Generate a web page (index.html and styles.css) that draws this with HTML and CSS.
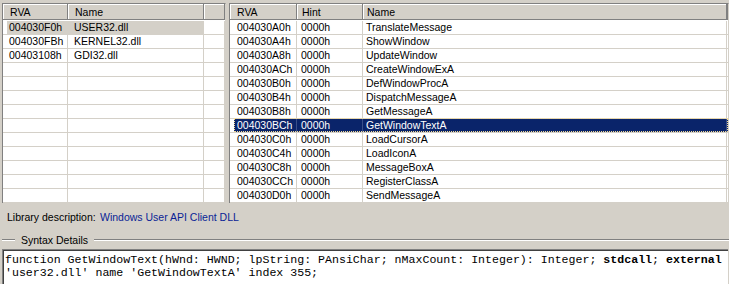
FILE: index.html
```html
<html>
	<head>
		<title>Imports</title>
		<link rel="stylesheet" href="styles.css">
	</head>
	<body>
		<div class="panes">
			<div class="list libs">
				<div class="hdr">
					<div class="hc c-rva">RVA</div>
					<div class="hc c-lname">Name</div>
					<div class="hc c-lfill"></div>
				</div>
				<div class="rows">
					<div class="row sel-grey"><div class="cell c-rva">004030F0h</div><div class="cell c-lname">USER32.dll</div><div class="cell c-lfill"></div></div>
					<div class="row"><div class="cell c-rva">004030FBh</div><div class="cell c-lname">KERNEL32.dll</div><div class="cell c-lfill"></div></div>
					<div class="row"><div class="cell c-rva">00403108h</div><div class="cell c-lname">GDI32.dll</div><div class="cell c-lfill"></div></div>
					<div class="row"><div class="cell c-rva"></div><div class="cell c-lname"></div><div class="cell c-lfill"></div></div>
					<div class="row"><div class="cell c-rva"></div><div class="cell c-lname"></div><div class="cell c-lfill"></div></div>
					<div class="row"><div class="cell c-rva"></div><div class="cell c-lname"></div><div class="cell c-lfill"></div></div>
					<div class="row"><div class="cell c-rva"></div><div class="cell c-lname"></div><div class="cell c-lfill"></div></div>
					<div class="row"><div class="cell c-rva"></div><div class="cell c-lname"></div><div class="cell c-lfill"></div></div>
					<div class="row"><div class="cell c-rva"></div><div class="cell c-lname"></div><div class="cell c-lfill"></div></div>
					<div class="row"><div class="cell c-rva"></div><div class="cell c-lname"></div><div class="cell c-lfill"></div></div>
					<div class="row"><div class="cell c-rva"></div><div class="cell c-lname"></div><div class="cell c-lfill"></div></div>
					<div class="row"><div class="cell c-rva"></div><div class="cell c-lname"></div><div class="cell c-lfill"></div></div>
					<div class="row"><div class="cell c-rva"></div><div class="cell c-lname"></div><div class="cell c-lfill"></div></div>
				</div>
			</div>
			<div class="list funcs">
				<div class="hdr">
					<div class="hc c-rva">RVA</div>
					<div class="hc c-hint">Hint</div>
					<div class="hc c-name">Name</div>
					<div class="hc c-fill"></div>
				</div>
				<div class="rows">
					<div class="row"><div class="cell c-rva">004030A0h</div><div class="cell c-hint">0000h</div><div class="cell c-name">TranslateMessage</div><div class="cell c-fill"></div></div>
					<div class="row"><div class="cell c-rva">004030A4h</div><div class="cell c-hint">0000h</div><div class="cell c-name">ShowWindow</div><div class="cell c-fill"></div></div>
					<div class="row"><div class="cell c-rva">004030A8h</div><div class="cell c-hint">0000h</div><div class="cell c-name">UpdateWindow</div><div class="cell c-fill"></div></div>
					<div class="row"><div class="cell c-rva">004030ACh</div><div class="cell c-hint">0000h</div><div class="cell c-name">CreateWindowExA</div><div class="cell c-fill"></div></div>
					<div class="row"><div class="cell c-rva">004030B0h</div><div class="cell c-hint">0000h</div><div class="cell c-name">DefWindowProcA</div><div class="cell c-fill"></div></div>
					<div class="row"><div class="cell c-rva">004030B4h</div><div class="cell c-hint">0000h</div><div class="cell c-name">DispatchMessageA</div><div class="cell c-fill"></div></div>
					<div class="row"><div class="cell c-rva">004030B8h</div><div class="cell c-hint">0000h</div><div class="cell c-name">GetMessageA</div><div class="cell c-fill"></div></div>
					<div class="row sel-navy"><div class="cell c-rva">004030BCh</div><div class="cell c-hint">0000h</div><div class="cell c-name">GetWindowTextA</div><div class="cell c-fill"></div></div>
					<div class="row"><div class="cell c-rva">004030C0h</div><div class="cell c-hint">0000h</div><div class="cell c-name">LoadCursorA</div><div class="cell c-fill"></div></div>
					<div class="row"><div class="cell c-rva">004030C4h</div><div class="cell c-hint">0000h</div><div class="cell c-name">LoadIconA</div><div class="cell c-fill"></div></div>
					<div class="row"><div class="cell c-rva">004030C8h</div><div class="cell c-hint">0000h</div><div class="cell c-name">MessageBoxA</div><div class="cell c-fill"></div></div>
					<div class="row"><div class="cell c-rva">004030CCh</div><div class="cell c-hint">0000h</div><div class="cell c-name">RegisterClassA</div><div class="cell c-fill"></div></div>
					<div class="row"><div class="cell c-rva">004030D0h</div><div class="cell c-hint">0000h</div><div class="cell c-name">SendMessageA</div><div class="cell c-fill"></div></div>
				</div>
			</div>
		</div>

		<div class="libdesc">
			<span class="lbl">Library description:</span>
			<span class="val">Windows User API Client DLL</span>
		</div>

		<div class="group">
			<div class="group-title">
				<span class="edge-l"></span>
				<span class="legend">Syntax Details</span>
				<span class="edge-r"></span>
			</div>
			<div class="code">function GetWindowText(hWnd: HWND; lpString: PAnsiChar; nMaxCount: Integer): Integer; <b>stdcall</b>; <b>external</b>
'user32.dll' name 'GetWindowTextA' index 355;</div>
		</div>
	</body>
</html>
```

FILE: styles.css
```css
body {
	margin: 0;
	padding: 3px 0 0 2px;
	width: 729px;
	height: 284px;
	box-sizing: border-box;
	overflow: hidden;
	background: #d4d0c8;
	color: #000000;
	font-family: "Liberation Sans", Arial, sans-serif;
	font-size: 10.5px;
}

/* the two list views */
.panes {
	display: flex;
	gap: 3px;
	height: 200px;
}

.list {
	background: #ffffff;
	border-left: 1px solid #808080;
	border-top: 1px solid #808080;
	border-right: 1px solid #d4d0c8;
	overflow: hidden;
}

.libs { width: 224px; box-sizing: border-box; }
.funcs { width: 500px; box-sizing: border-box; }

.hdr {
	display: flex;
	height: 16px;
	background: #d4d0c8;
}

.hc {
	box-sizing: border-box;
	height: 16px;
	line-height: 16px;
	white-space: nowrap;
	box-shadow: inset -1px -1px 0 #808080, inset 1px 1px 0 #ffffff;
}

.rows {
	padding-top: 1px;
}

.row {
	display: flex;
	height: 14px;
	box-sizing: border-box;
	border-bottom: 1px solid #d4d0c8;
}

.cell {
	box-sizing: border-box;
	height: 13px;
	line-height: 13px;
	white-space: nowrap;
	overflow: hidden;
	border-right: 1px solid #d4d0c8;
}

/* column widths */
.c-rva { width: 65px; padding-left: 6px; }
.c-lname { width: 136px; padding-left: 6px; }
.c-lfill { width: 21px; background: #ffffff; }
.funcs .c-rva { width: 67px; padding-left: 7px; }
.c-hint { width: 66px; padding-left: 4px; }
.c-name { width: 364px; padding-left: 3px; }
.c-fill { width: 1px; border-right: none; }

.hc.c-rva { padding-left: 7px; }
.hc.c-lname { padding-left: 7px; }
.hc.c-hint { padding-left: 5px; }
.hc.c-name { padding-left: 4px; }
.hc.c-lfill { background: #d4d0c8; }

/* selections */
.sel-grey {
	background: linear-gradient(90deg, #ffffff 4px, #d4d0c8 4px);
}

.sel-navy {
	position: relative;
	color: #ffffff;
	background: linear-gradient(90deg, #ffffff 4px, #0a246a 4px);
}

.sel-navy .cell { border-right-color: #3a4f8a; }

.sel-navy::after {
	content: "";
	position: absolute;
	left: 4px;
	right: 0;
	top: -1px;
	bottom: 0;
	border: 1px dotted #f5db95;
}

/* library description */
.libdesc {
	height: 28px;
	line-height: 28px;
	padding-left: 5px;
	display: flex;
}

.lbl { width: 93px; }
.val { color: #0a1f96; }

/* syntax group */
.group-title {
	display: flex;
	align-items: center;
	height: 18px;
}

.edge-l, .edge-r {
	height: 0;
	border-top: 1px solid #808080;
	border-bottom: 1px solid #ffffff;
}

.edge-l { width: 13px; }
.edge-r { flex: 1; }

.legend {
	padding: 0 6px;
	line-height: 14px;
}

.code {
	margin-right: 1px;
	height: 40px;
	background: #ffffff;
	border-top: 1px solid #808080;
	border-left: 1px solid #808080;
	box-shadow: inset 1px 1px 0 #404040;
	padding: 3px 0 0 2px;
	font-family: "Liberation Mono", "Courier New", monospace;
	font-size: 11.6px;
	line-height: 13px;
	white-space: pre;
	overflow: hidden;
}
```
